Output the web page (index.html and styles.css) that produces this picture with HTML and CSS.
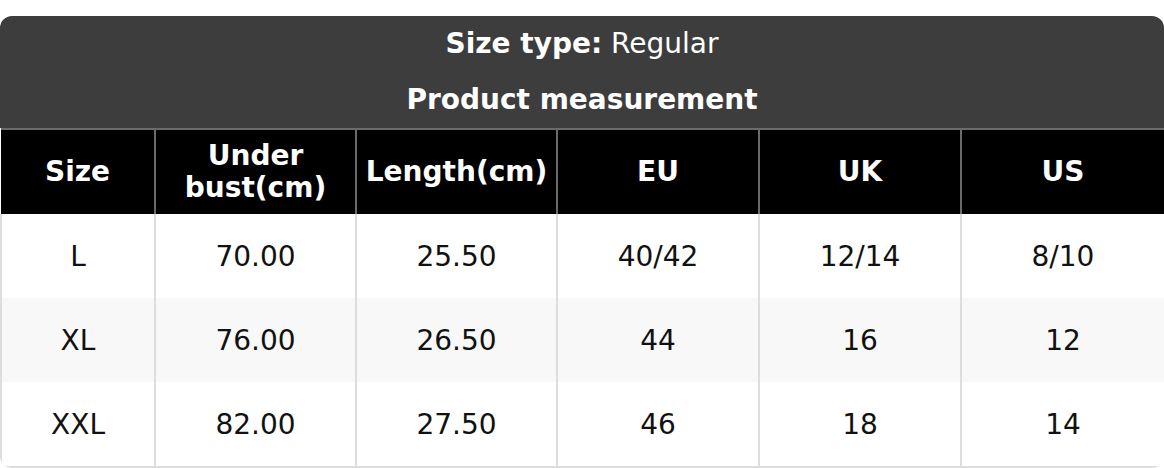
FILE: index.html
```html
<!DOCTYPE html>
<html>
<head>
<meta charset="utf-8">
<link rel="stylesheet" href="styles.css">
</head>
<body>
<div class="chart">
  <div class="caption">
    <div class="caption-line"><b>Size type:</b> Regular</div>
    <div class="caption-line"><b>Product measurement</b></div>
  </div>
  <table class="sizes">
    <colgroup>
      <col class="c1"><col class="c2"><col class="c3"><col class="c4"><col class="c5"><col class="c6">
    </colgroup>
    <thead>
      <tr>
        <th>Size</th>
        <th>Under<br>bust(cm)</th>
        <th>Length(cm)</th>
        <th>EU</th>
        <th>UK</th>
        <th>US</th>
      </tr>
    </thead>
    <tbody>
      <tr><td>L</td><td>70.00</td><td>25.50</td><td>40/42</td><td>12/14</td><td>8/10</td></tr>
      <tr class="alt"><td>XL</td><td>76.00</td><td>26.50</td><td>44</td><td>16</td><td>12</td></tr>
      <tr><td>XXL</td><td>82.00</td><td>27.50</td><td>46</td><td>18</td><td>14</td></tr>
    </tbody>
  </table>
</div>
</body>
</html>
```

FILE: styles.css
```css
html, body {
  margin: 0;
  padding: 0;
  background: #ffffff;
}
body {
  padding-top: 16px;
  font-family: "DejaVu Sans", sans-serif;
}
.chart {
  width: 1164px;
  border-radius: 12px;
  overflow: hidden;
  background: #ffffff;
}
.caption {
  background: #3d3d3d;
  color: #ffffff;
  font-size: 28px;
  text-align: center;
}
.caption-line {
  height: 56px;
  line-height: 56px;
}
.caption b {
  font-weight: bold;
}
.sizes {
  width: 1164px;
  border-collapse: collapse;
  table-layout: fixed;
  font-size: 28px;
}
.c1 { width: 154px; }
.c2 { width: 201px; }
.c3 { width: 201px; }
.c4 { width: 202px; }
.c5 { width: 202px; }
.c6 { width: 204px; }
.sizes th {
  background: #000000;
  color: #ffffff;
  font-weight: bold;
  height: 84px;
  padding: 0;
  line-height: 32px;
  text-align: center;
  border: 2px solid #6b6b6b;
  border-bottom: none;
}
.sizes th:first-child { border-left: none; }
.sizes td {
  height: 84px;
  padding: 0;
  text-align: center;
  color: #111111;
  border-left: 2px solid #dddddd;
  border-right: 2px solid #dddddd;
}
.sizes tr.alt td {
  background: #f8f8f8;
}
.sizes tbody tr:last-child td {
  border-bottom: 2px solid #dddddd;
}
```
